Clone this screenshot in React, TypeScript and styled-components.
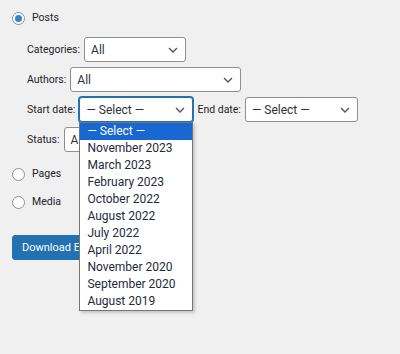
import React from "react";
import styled, { createGlobalStyle } from "styled-components";

const Global = createGlobalStyle`
  html, body { margin: 0; padding: 0; background: #f0f0f1; }
  body { font-family: Roboto, "Liberation Sans", sans-serif; font-size: 10.5px; color: #1d2327; }
  * { box-sizing: border-box; }
`;

const Page = styled.div`
  width: 400px;
  height: 354px;
  padding: 11px 12px 0 12px;
  display: flex;
  flex-direction: column;
`;

const RadioRow = styled.label<{ $mt?: number }>`
  display: flex;
  align-items: center;
  gap: 7px;
  height: 14px;
  margin-top: ${(p) => p.$mt ?? 0}px;
  line-height: 14px;
  color: #1d2327;
`;

const RadioCircle = styled.span<{ $checked?: boolean }>`
  width: 13px;
  height: 13px;
  border-radius: 50%;
  border: 1px solid #8c8f94;
  background: #fff;
  display: flex;
  align-items: center;
  justify-content: center;
  &::after {
    content: "";
    display: ${(p) => (p.$checked ? "block" : "none")};
    width: 7px;
    height: 7px;
    border-radius: 50%;
    background: #3582c4;
  }
`;

const Filters = styled.div`
  display: flex;
  flex-direction: column;
  gap: 5px;
  margin: 12px 0 0 15px;
`;

const FilterRow = styled.div`
  display: flex;
  align-items: center;
  gap: 4px;
  height: 25px;
`;

const Label = styled.span`
  color: #1d2327;
  white-space: nowrap;
`;

const SelectBox = styled.div<{ $w: number; $focus?: boolean }>`
  position: relative;
  width: ${(p) => p.$w}px;
  height: 25px;
  background: #fff;
  border: 1px solid ${(p) => (p.$focus ? "#2271b1" : "#8c8f94")};
  box-shadow: ${(p) => (p.$focus ? "0 0 0 1px #2271b1" : "none")};
  border-radius: 3px;
  padding: 0 24px 0 6px;
  display: flex;
  align-items: center;
  color: #2c3338;
  font-size: 12px;
  white-space: nowrap;
  overflow: hidden;
`;

const Chevron = styled.svg`
  position: absolute;
  right: 7px;
  top: 50%;
  margin-top: -3px;
`;

const DropList = styled.div`
  position: absolute;
  left: 0;
  top: 25px;
  width: 114px;
  background: #fff;
  border: 1px solid #767676;
  box-shadow: 2px 2px 3px rgba(0, 0, 0, 0.18);
  font-size: 12px;
  z-index: 10;
`;

const Option = styled.div<{ $active?: boolean }>`
  height: 17px;
  line-height: 17px;
  padding-left: 7px;
  background: ${(p) => (p.$active ? "#1967d2" : "transparent")};
  color: ${(p) => (p.$active ? "#fff" : "#1d2b3a")};
  white-space: nowrap;
`;

const Anchor = styled.div`
  position: relative;
`;

const Button = styled.button`
  align-self: flex-start;
  margin-top: 26px;
  height: 25px;
  padding: 0 9px;
  border: 1px solid #2271b1;
  border-radius: 3px;
  background: #2271b1;
  color: #fff;
  font-family: inherit;
  font-size: 11px;
`;

const ChevronIcon = () => (
  <Chevron width="10" height="6" viewBox="0 0 10 6">
    <path d="M1 1l4 4 4-4" fill="none" stroke="#50575e" strokeWidth="1.4" />
  </Chevron>
);

const Select = ({
  w,
  value,
  focus,
  children,
}: {
  w: number;
  value: string;
  focus?: boolean;
  children?: React.ReactNode;
}) => (
  <Anchor>
    <SelectBox $w={w} $focus={focus}>
      {value}
      <ChevronIcon />
    </SelectBox>
    {children}
  </Anchor>
);

const dates = [
  "— Select —",
  "November 2023",
  "March 2023",
  "February 2023",
  "October 2022",
  "August 2022",
  "July 2022",
  "April 2022",
  "November 2020",
  "September 2020",
  "August 2019",
];

export default function App() {
  return (
    <>
      <Global />
      <Page>
        <RadioRow>
          <RadioCircle $checked />
          Posts
        </RadioRow>
        <Filters>
          <FilterRow>
            <Label>Categories:</Label>
            <Select w={102} value="All" />
          </FilterRow>
          <FilterRow>
            <Label>Authors:</Label>
            <Select w={171} value="All" />
          </FilterRow>
          <FilterRow>
            <Label>Start date:</Label>
            <Select w={114} value="— Select —" focus>
              <DropList>
                {dates.map((d, i) => (
                  <Option key={d} $active={i === 0}>
                    {d}
                  </Option>
                ))}
              </DropList>
            </Select>
            <Label>End date:</Label>
            <Select w={113} value="— Select —" />
          </FilterRow>
          <FilterRow>
            <Label>Status:</Label>
            <Select w={110} value="All" />
          </FilterRow>
        </Filters>
        <RadioRow $mt={15}>
          <RadioCircle />
          Pages
        </RadioRow>
        <RadioRow $mt={14}>
          <RadioCircle />
          Media
        </RadioRow>
        <Button>Download Export File</Button>
      </Page>
    </>
  );
}
